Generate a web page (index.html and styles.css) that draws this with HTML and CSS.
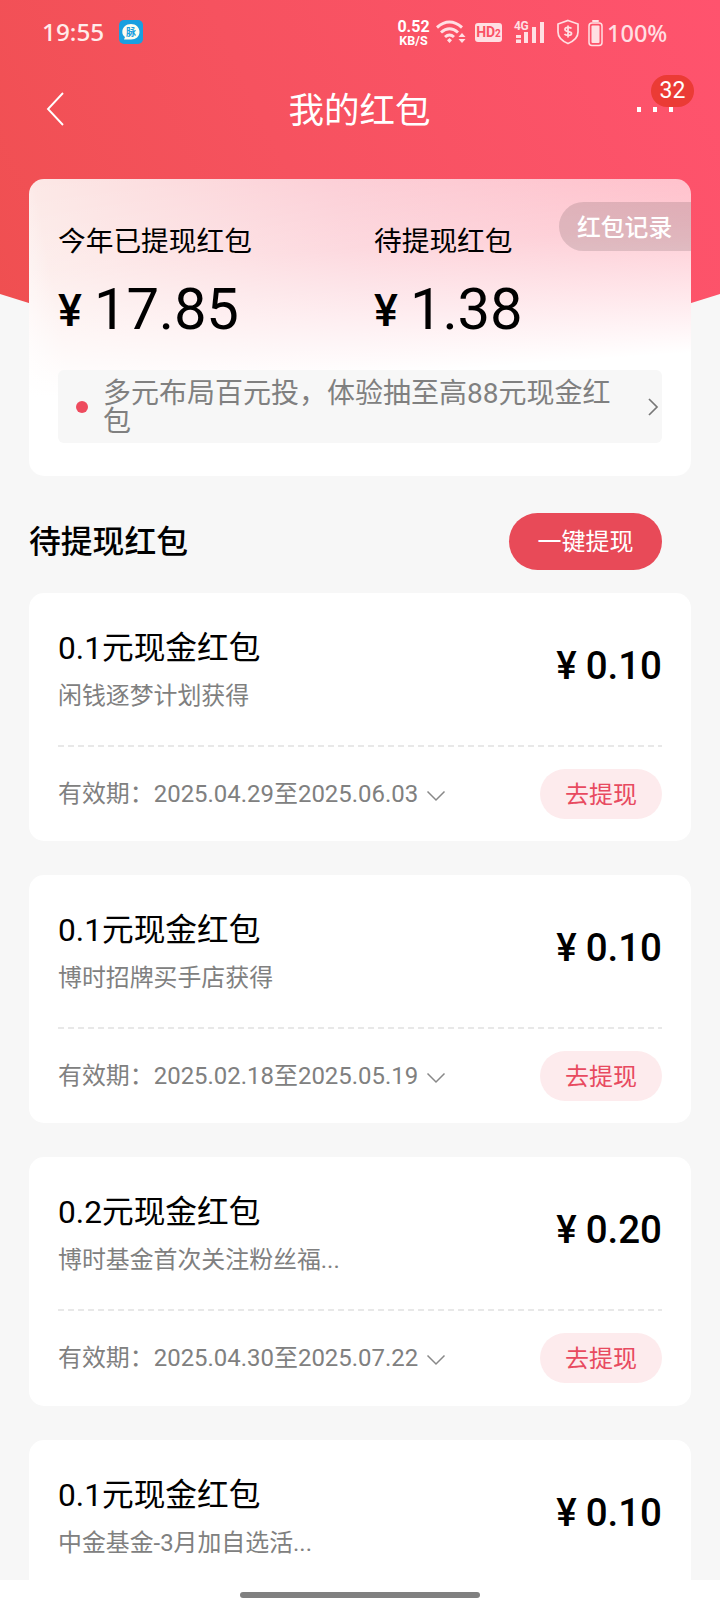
FILE: index.html
```html
<!DOCTYPE html>
<html lang="zh-CN">
<head>
<meta charset="utf-8">
<title>我的红包</title>
<link rel="stylesheet" href="styles.css">
</head>
<body>
<div class="screen">
  <div class="hero"></div>
  <header class="status">
    <span class="clock">19:55</span>
    <span class="app"><svg width="24" height="24" viewBox="0 0 24 24"><rect width="24" height="24" rx="5" fill="#199fe0"/><path d="M12 4c5 0 8.500 3.500 8.500 8s-3.500 7.500-8.500 7.500H5l1-2.500c-1.800-1.400-2.700-3-2.700-5C3.300 7.500 7 4 12 4z" fill="#fffdf0"/></svg><b>脉</b></span>
    <span class="speed"><b>0.52</b><i>KB/S</i></span>
    <svg class="wifi" width="31" height="24" viewBox="0 0 31 24" fill="none" stroke="#ffdfe3" stroke-width="3"><path d="M1 7.500Q13.500-3.500 26 7.500M5 12.500Q13.500 5 22 12.500M9 17Q13.500 13 18 17"/><path d="M13.500 18l2.500 2.300-2.500 2.700-2.500-2.700zM26 13l3.500 4h-7zM26 23l3.500-4h-7z" fill="#ffdfe3" stroke="none"/></svg>
    <span class="hd">HD<small>2</small></span>
    <span class="signal"><em>4G</em><svg width="30" height="23" viewBox="0 0 30 23" fill="#ffdfe3"><path d="M1 14h5v3H1zM1 18.500h5V22H1zM9 11h4v11H9zM17 6h4v16h-4zM25 1h4v21h-4z"/></svg></span>
    <svg class="shield" width="24" height="26" viewBox="0 0 24 26" fill="none" stroke="#ffdfe3" stroke-width="1.700"><path d="M12 1.500L22 5v8c0 5.500-4 9-10 11.500C6 22 2 18.500 2 13V5z"/><path d="M15.500 9.500c-1-1.500-6.500-1.800-6.500 1s6.500 1.500 6.500 4-5.500 2.500-7 .5M12 6.500v12" stroke-width="1.800"/></svg>
    <svg class="battery" width="15" height="27" viewBox="0 0 15 27"><rect x="4" width="7" height="2" rx="1" fill="#ffdfe3"/><rect x="1" y="3" width="13" height="22.500" rx="3" fill="none" stroke="#ffdfe3" stroke-width="1.500"/><rect x="3.500" y="5.500" width="8" height="17.500" rx="1" fill="#ffdfe3"/></svg>
    <span class="percent">100%</span>
  </header>
  <nav class="nav">
    <svg class="back" width="19" height="34" viewBox="0 0 19 34" fill="none" stroke="#fff" stroke-width="1.900"><path d="M17 1L2 17l15 16"/></svg>
    <h1>我的红包</h1>
    <div class="more"><i></i><i></i><i></i><span class="badge">32</span></div>
  </nav>
  <section class="summary">
    <div class="totals">
      <div class="total"><p>今年已提现红包</p><div class="sum"><span>¥</span>17.85</div></div>
      <div class="total"><p>待提现红包</p><div class="sum"><span>¥</span>1.38</div></div>
    </div>
    <a class="record">红包记录</a>
    <div class="tip"><i class="dot"></i><p>多元布局百元投，体验抽至高88元现金红包</p><svg width="12" height="20" viewBox="0 0 12 20" fill="none" stroke="#777" stroke-width="1.700"><path d="M2 2l8 8-8 8"/></svg></div>
  </section>
  <div class="heading"><h2>待提现红包</h2><button class="all">一键提现</button></div>
  <main class="list">
    <article class="card">
      <div class="top"><div><h3>0.1元现金红包</h3><p>闲钱逐梦计划获得</p></div><div class="amount"><span>¥</span>0.10</div></div>
      <svg class="rule" width="604" height="2" viewBox="0 0 604 2"><path d="M0 1h604" stroke="#e8e8e8" stroke-width="2" stroke-dasharray="6 4"/></svg>
      <div class="bottom"><span>有效期：2025.04.29至2025.06.03</span><svg class="down" width="20" height="12" viewBox="0 0 20 12" fill="none" stroke="#888" stroke-width="1.500"><path d="M1.500 1.500L10 10l8.500-8.500"/></svg><button>去提现</button></div>
    </article>
    <article class="card">
      <div class="top"><div><h3>0.1元现金红包</h3><p>博时招牌买手店获得</p></div><div class="amount"><span>¥</span>0.10</div></div>
      <svg class="rule" width="604" height="2" viewBox="0 0 604 2"><path d="M0 1h604" stroke="#e8e8e8" stroke-width="2" stroke-dasharray="6 4"/></svg>
      <div class="bottom"><span>有效期：2025.02.18至2025.05.19</span><svg class="down" width="20" height="12" viewBox="0 0 20 12" fill="none" stroke="#888" stroke-width="1.500"><path d="M1.500 1.500L10 10l8.500-8.500"/></svg><button>去提现</button></div>
    </article>
    <article class="card">
      <div class="top"><div><h3>0.2元现金红包</h3><p>博时基金首次关注粉丝福...</p></div><div class="amount"><span>¥</span>0.20</div></div>
      <svg class="rule" width="604" height="2" viewBox="0 0 604 2"><path d="M0 1h604" stroke="#e8e8e8" stroke-width="2" stroke-dasharray="6 4"/></svg>
      <div class="bottom"><span>有效期：2025.04.30至2025.07.22</span><svg class="down" width="20" height="12" viewBox="0 0 20 12" fill="none" stroke="#888" stroke-width="1.500"><path d="M1.500 1.500L10 10l8.500-8.500"/></svg><button>去提现</button></div>
    </article>
    <article class="card">
      <div class="top"><div><h3>0.1元现金红包</h3><p>中金基金-3月加自选活...</p></div><div class="amount"><span>¥</span>0.10</div></div>
    </article>
  </main>
  <footer class="home"><i></i></footer>
</div>
</body>
</html>
```
FILE: styles.css
```css
* { box-sizing: border-box; margin: 0; padding: 0; }
body { font-family: Roboto, "Noto Sans CJK SC", sans-serif; background: #f7f7f7; color: #000; }
i, em { font-style: normal; }
button { border: 0; font-family: inherit; }
svg { display: block; flex: none; }
.screen { position: relative; width: 720px; height: 1612px; overflow: hidden; display: flex; flex-direction: column; background: #f7f7f7; }
.hero { position: absolute; left: 0; top: 0; width: 720px; height: 340px; background: linear-gradient(65deg, #ef4f50 0%, #f6525f 42%, #ff536e 100%); clip-path: polygon(0 0, 100% 0, 100% 294px, 96% 303px, 80% 330px, 20% 330px, 4% 303px, 0 294px); }
.status { position: relative; height: 64px; display: flex; align-items: center; padding-left: 42px; color: #fff; flex: none; }
.clock { width: 77px; font: 500 24.300px/30px "Noto Sans", sans-serif; color: #ffeceb; }
.app { position: relative; width: 24px; height: 24px; }
.app b { position: absolute; left: 7px; top: 6px; font: 700 10px/11px "Noto Sans CJK SC", sans-serif; color: #199fe0; }
.speed { width: 33px; margin-left: 254px; display: flex; flex-direction: column; align-items: center; padding-top: 2px; }
.speed b { font: 700 16px/14px Roboto, sans-serif; }
.speed i { font: 700 12.500px/13px Roboto, sans-serif; }
.wifi { margin-left: 6px; }
.hd { width: 27px; height: 19px; margin-left: 8px; border-radius: 3px; background: #ffdfe3; color: #fa5265; font: 700 14px/19px Roboto, sans-serif; text-align: center; white-space: nowrap; }
.hd small { font-size: 10px; }
.signal { position: relative; margin-left: 13px; width: 30px; }
.signal em { position: absolute; left: -1px; top: -1px; font: 700 12px/12px Roboto, sans-serif; letter-spacing: -.5px; color: #ffdfe3; }
.shield { margin-left: 11px; }
.battery { margin-left: 8px; margin-top: 2px; }
.percent { margin-left: 4px; font: 500 23.500px/30px "Noto Sans", sans-serif; color: #ffdfe3; padding-top: 2px; }
.nav { position: relative; height: 92px; flex: none; display: flex; align-items: center; justify-content: space-between; padding: 0 47px 3px 46px; color: #fff; }
.nav h1 { font-size: 35.500px; line-height: 48px; font-weight: 400; margin: 4px 0 0 17px; }
.more { position: relative; display: flex; gap: 12px; padding-top: 1px; }
.more i { width: 4px; height: 5px; background: #fff; }
.badge { position: absolute; left: 14px; top: -31px; width: 43px; height: 32px; border-radius: 16px; background: #eb3b35; font-size: 23px; line-height: 32px; text-align: center; }
.summary { position: relative; flex: none; height: 297px; margin: 23px 29px 0; border-radius: 15px; background: linear-gradient(176deg, rgba(255,255,255,0), rgba(255,255,255,.25) 27%, #fff 64%), linear-gradient(80deg, #fff 0%, #fce8e6 8%, #fccdd5 50%, #ffb9c5 100%); }
.totals { display: flex; padding: 45px 0 0 29px; height: 191px; }
.total { width: 316px; flex: none; }
.total p { font-size: 27.700px; line-height: 36px; }
.sum { font-size: 58px; line-height: 66px; margin-top: 16px; display: flex; align-items: baseline; letter-spacing: -.2px; }
.sum span { width: 36px; font-size: 45px; font-weight: 500; line-height: 50px; padding-top: 4px; align-self: center; }
.record { position: absolute; right: 0; top: 23px; width: 132px; height: 49px; padding-left: 18px; border-radius: 25px 0 0 25px; background: rgba(0,0,0,.12); color: #fff; font-size: 23.800px; line-height: 52px; font-weight: 500; }
.tip { margin: 0 29px; height: 73px; border-radius: 6px; background: #f7f7f7; display: flex; align-items: center; padding-left: 18px; color: #808080; }
.dot { width: 12px; height: 12px; border-radius: 50%; background: #ee4b5e; }
.tip p { width: 530px; margin-left: 15px; font-size: 28px; line-height: 28px; padding: 2px 10px 0 0; }
.tip svg { margin-left: 14px; }
.heading { height: 57px; flex: none; margin: 37px 58px 23px 29px; display: flex; align-items: center; justify-content: space-between; }
.heading h2 { font-size: 31.800px; font-weight: 500; padding-bottom: 5px; }
.all { width: 153px; height: 57px; border-radius: 29px; background: #e84a58; color: #fff; font-size: 24px; padding-bottom: 4px; }
.list { display: flex; flex-direction: column; gap: 34px; margin: 0 29px; }
.card { height: 248.200px; flex: none; border-radius: 15px; background: #fff; padding: 34px 29px 0 29px; }
.top { height: 118px; display: flex; justify-content: space-between; }
.top h3 { font-size: 31.700px; line-height: 44px; font-weight: 400; }
.top p { font-size: 23.900px; line-height: 34px; margin-top: 8px; color: #808080; }
.amount { font-size: 38.500px; line-height: 46px; margin-top: 16px; font-weight: 500; }
.amount span { margin-right: 9px; }
.rule { width: 604px; }
.bottom { display: flex; align-items: center; height: 94px; font-size: 23.950px; color: #808080; }
.bottom span { padding-bottom: 5px; }
.down { margin: 4px 0 0 8px; }
.bottom button { margin-left: auto; width: 122px; height: 50px; border-radius: 25px; background: #fdebed; color: #e84a60; font-size: 24px; padding-bottom: 3px; }
.home { position: absolute; left: 0; bottom: 0; width: 720px; height: 32px; background: #fff; display: flex; justify-content: center; padding-top: 12px; }
.home i { width: 240px; height: 6px; border-radius: 3px; background: #808080; }
```
